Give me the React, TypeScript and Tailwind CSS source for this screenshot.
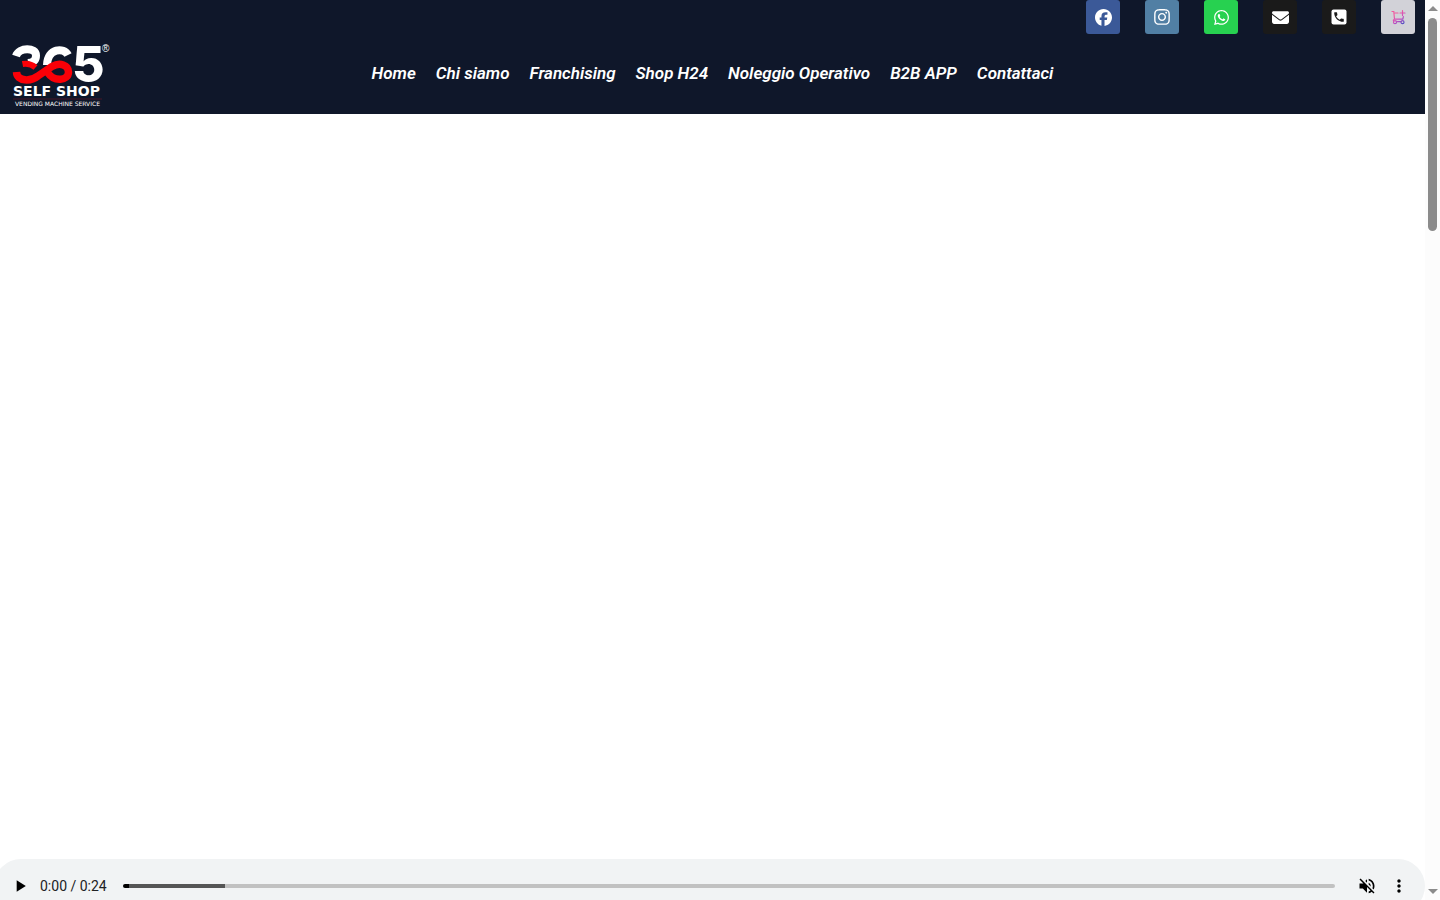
import React, { useState } from 'react';
import { FaEnvelope, FaFacebook, FaInstagram, FaWhatsapp } from 'react-icons/fa6';
import { MdMoreVert, MdPlayArrow, MdVolumeOff } from 'react-icons/md';

const navLinks = ['Home', 'Chi siamo', 'Franchising', 'Shop H24', 'Noleggio Operativo', 'B2B APP', 'Contattaci'];

const CartIcon: React.FC = () => (
  <svg viewBox="0 0 16 16" className="w-4 h-4" fill="none" stroke="url(#cart)" strokeWidth="1.2" strokeLinecap="round">
    <defs>
      <linearGradient id="cart" gradientUnits="userSpaceOnUse" x1="3" y1="2" x2="13" y2="16">
        <stop offset="0.25" stopColor="#f05aa0" />
        <stop offset="0.6" stopColor="#c94fc0" />
        <stop offset="1" stopColor="#3d4fc4" />
      </linearGradient>
    </defs>
    <path d="M2 2.500h1.800l.7 7.700h8.300l.6-2.700M5 4h3M10 4h5M12.500 1.500v5M4.500 10.200c-1 .3-1.400 1-1 1.800" />
    <circle cx="5" cy="13.200" r="1.500" />
    <circle cx="12.500" cy="13.200" r="1.500" />
    <path d="M6.500 12.600h4.500" />
  </svg>
);

const PhoneIcon: React.FC = () => (
  <svg viewBox="0 0 16 16" className="w-4 h-4">
    <rect x="0.5" y="0.5" width="15" height="15" rx="2" fill="#fff" />
    <path
      transform="translate(1.600 1.600) scale(0.533)"
      fill="#1a1a1a"
      d="M6.620 10.790c1.440 2.830 3.760 5.140 6.590 6.590l2.200-2.200c.27-.27.67-.36 1.020-.24 1.120.37 2.330.57 3.570.57.55 0 1 .45 1 1V20c0 .55-.45 1-1 1-9.390 0-17-7.610-17-17 0-.55.45-1 1-1h3.500c.55 0 1 .45 1 1 0 1.250.2 2.450.57 3.570.11.35.03.74-.25 1.020l-2.200 2.200z"
    />
  </svg>
);

const socials = [
  { label: 'Facebook', bg: 'bg-[#3b5998]', icon: <FaFacebook className="w-[17px] h-[17px]" /> },
  { label: 'Instagram', bg: 'bg-[#517fa4]', icon: <FaInstagram className="w-[18px] h-[18px]" /> },
  { label: 'WhatsApp', bg: 'bg-[#27d150]', icon: <FaWhatsapp className="w-[17px] h-[17px]" /> },
  { label: 'Email', bg: 'bg-[#1a1a1a]', icon: <FaEnvelope className="w-[17px] h-[17px]" /> },
  { label: 'Telefono', bg: 'bg-[#1a1a1a]', icon: <PhoneIcon /> },
  { label: 'Shop', bg: 'bg-[#d2d2d8]', icon: <CartIcon /> },
];

const Logo: React.FC = () => (
  <svg viewBox="0 0 100 64" className="w-[100px] h-16 overflow-visible" role="img" aria-label="365 Self Shop">
    <g fill="none" stroke="#fff" strokeWidth="8">
      <path d="M4 12C7 3 24 3 24 11.500c0 5-3 7-8 7.500" />
      <path d="M56 11C52 3 35.500 4 35 21" />
    </g>
    <text x="60" y="38" fill="#fff" fontFamily="Inter, sans-serif" fontWeight="800" fontSize="50">5</text>
    {/* ribbon joining the lower bowls of the 3 and the 6 */}
    <path d="M10.500 20c5-1 9 0 13 3.500" fill="none" stroke="#fb0007" strokeWidth="6" />
    <path
      d="M4.500 28C5 38 19 37.500 26 32L40 22.500C48 18 56.500 21 56.500 28C56.500 37 42 38 36 29"
      fill="none"
      stroke="#fb0007"
      strokeWidth="7.500"
    />
    <text x="90" y="8" fill="#fff" fontFamily="Liberation Sans, sans-serif" fontSize="10">®</text>
    <g fill="#fff" fontFamily="DejaVu Sans, sans-serif">
      <text x="1" y="52" fontWeight="700" fontSize="14">SELF SHOP</text>
      <text x="3" y="62" fontSize="6">VENDING MACHINE SERVICE</text>
    </g>
    <path d="M1 55H90" stroke="#7d1524" strokeWidth="0.5" />
  </svg>
);

const Header: React.FC = () => (
  <header className="bg-[#0f172a]">
    <div className="flex justify-end gap-[25px] px-2.5">
      {socials.map((s) => (
        <a
          key={s.label}
          href="#"
          aria-label={s.label}
          className={`flex items-center justify-center w-[34px] h-[34px] rounded-[3px] text-white ${s.bg}`}
        >
          {s.icon}
        </a>
      ))}
    </div>
    <div className="grid grid-cols-[1fr_auto_1fr] items-center h-20 px-3">
      <a href="#" className="w-fit pt-1">
        <Logo />
      </a>
      <nav className="flex gap-5 pb-0.5 text-[17px] leading-6 font-semibold italic text-white">
        {navLinks.map((link) => (
          <a key={link} href="#" className="whitespace-nowrap">
            {link}
          </a>
        ))}
      </nav>
    </div>
  </header>
);

const AudioPlayer: React.FC = () => {
  const [time, setTime] = useState(0);

  return (
    <div className="flex items-center h-[54px] -ml-1.5 px-2.5 rounded-full bg-[#f1f3f4] text-black">
      <button aria-label="Play" className="flex items-center justify-center w-8 h-8">
        <MdPlayArrow className="w-5 h-5" />
      </button>
      <span className="ml-1 text-sm text-[#202124] whitespace-nowrap">0:00 / 0:24</span>
      <input
        type="range"
        aria-label="Posizione audio"
        min={0}
        max={24}
        value={time}
        onChange={(e) => setTime(Number(e.target.value))}
        className="flex-1 min-w-0 h-1 mx-4 appearance-none rounded-full bg-[linear-gradient(to_right,#000_6px,#555_6px,#555_102px,#c1c1c1_102px)] [&::-webkit-slider-thumb]:appearance-none [&::-webkit-slider-thumb]:w-0"
      />
      <button aria-label="Audio disattivato" className="flex items-center justify-center w-8 h-8">
        <MdVolumeOff className="w-5 h-5" />
      </button>
      <button aria-label="Altre opzioni" className="flex items-center justify-center w-8 h-8">
        <MdMoreVert className="w-5 h-5" />
      </button>
    </div>
  );
};

const ScrollRail: React.FC = () => (
  <div className="flex flex-col items-center w-[15px] shrink-0 py-1.5 bg-[#fcfcfc]" aria-hidden="true">
    <svg viewBox="0 0 10 5" className="w-2.5 h-[5px] shrink-0" fill="#8b8b8b">
      <path d="M5 0l5 5H0z" />
    </svg>
    <div className="flex-1 w-[9px] pt-[7px] pb-1">
      <div className="h-[calc(25%-4px)] rounded-full bg-[#8b8b8b]" />
    </div>
    <svg viewBox="0 0 10 5" className="w-2.5 h-[5px] shrink-0" fill="#8b8b8b">
      <path d="M5 5l5-5H0z" />
    </svg>
  </div>
);

export default function App() {
  return (
    <div className="flex h-screen overflow-hidden bg-white font-[Roboto,sans-serif]">
      <div className="flex-1 min-w-0 overflow-hidden">
        <Header />
        <main>
          <section className="h-[calc(100vh-155px)]" />
          <AudioPlayer />
        </main>
      </div>
      <ScrollRail />
    </div>
  );
}
